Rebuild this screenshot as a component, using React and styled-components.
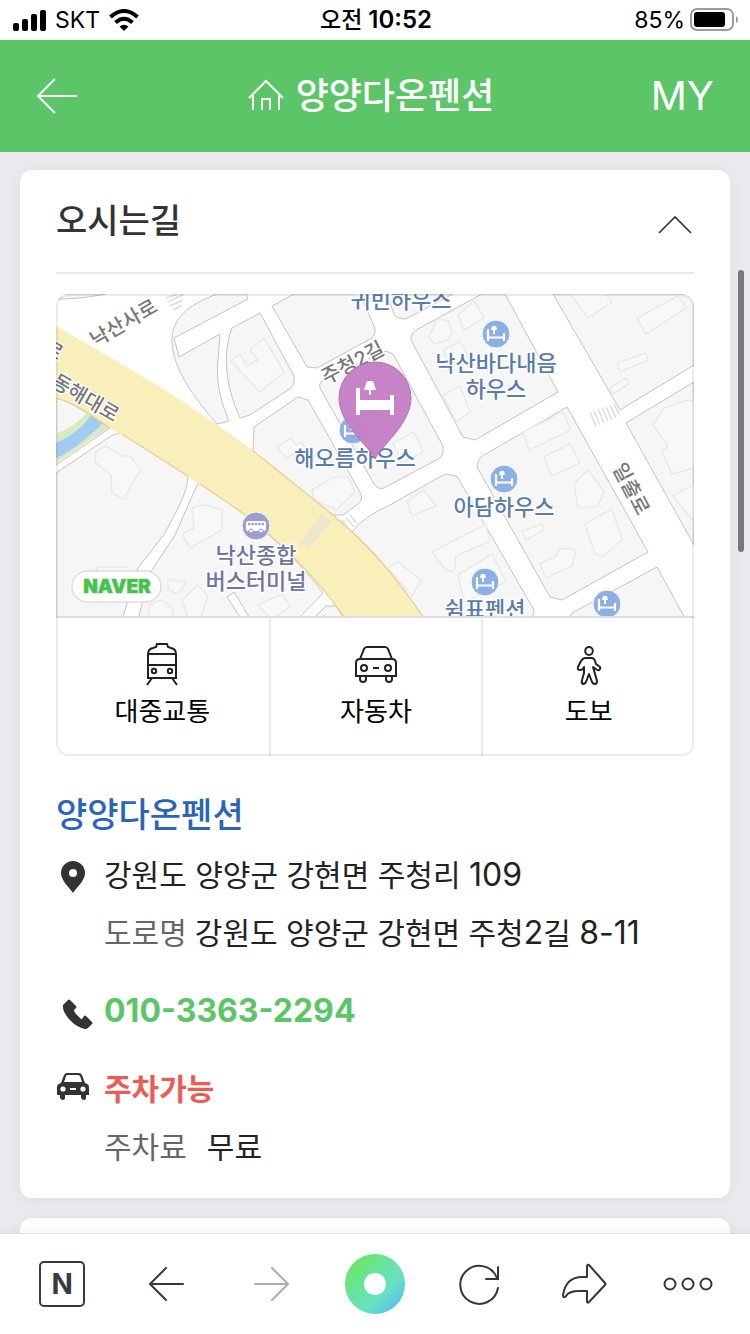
import React, { useState } from 'react'
import styled, { createGlobalStyle } from 'styled-components'

const GlobalStyle = createGlobalStyle`
    * {
        box-sizing: border-box;
    }
    body {
        margin: 0;
        background: #e9eaee;
        font-family: Inter, 'Noto Sans CJK KR', sans-serif;
        color: #222;
    }
    button {
        padding: 0;
        border: 0;
        background: none;
        font-family: inherit;
        color: inherit;
        cursor: pointer;
    }
    a {
        color: inherit;
        text-decoration: none;
    }
    h1, h2, h3, p {
        margin: 0;
    }
    svg {
        display: block;
        flex: none;
    }
`
const Screen = styled.div`
    display: flex;
    flex-direction: column;
    height: 100vh;
    overflow: hidden;
`

/* 상태바 */
const StatusBar = styled.div`
    display: grid;
    grid-template-columns: 1fr auto 1fr;
    align-items: center;
    flex: none;
    height: 40px;
    padding: 0 11px 0 13px;
    background: #fff;
    color: #000;
    line-height: 40px;
`
const StatusSide = styled.div`
    display: flex;
    align-items: center;
    justify-content: ${(props) => (props.$end ? 'flex-end' : 'flex-start')};
    gap: ${(props) => (props.$end ? '5px' : '9px')};
    font-size: 23px;
`
const StatusTime = styled.div`
    display: flex;
    gap: 6px;
    font-size: 24px;
    font-weight: 600;
`
const Meridiem = styled.span`
    font-size: 23px;
    font-weight: 500;
`

/* 헤더 */
const Header = styled.header`
    display: grid;
    grid-template-columns: 1fr auto 1fr;
    align-items: center;
    flex: none;
    height: 112px;
    padding: 0 36px;
    background: #5bc568;
    color: #fff;
`
const HeaderTitle = styled.a`
    display: flex;
    align-items: center;
    gap: 12px;
    padding-right: 8px;
`
const HeaderName = styled.h1`
    font-size: 36px;
    font-weight: 500;
    line-height: 52px;
`
const HeaderMy = styled.a`
    justify-self: end;
    font-size: 40px;
    line-height: 52px;
`

/* 본문 */
const Content = styled.main`
    position: relative;
    flex: 1;
    min-height: 0;
    overflow: hidden;
    padding: 18px 20px 0;
`
const ScrollThumb = styled.div`
    position: absolute;
    top: 118px;
    right: 6px;
    width: 6px;
    height: 282px;
    border-radius: 3px;
    background: #77797b;
`
const Card = styled.section`
    min-height: 100px;
    margin-bottom: 20px;
    padding: 0 36px 22px;
    border-radius: 12px;
    background: #fff;
    box-shadow: 0 2px 16px rgba(0, 0, 0, 0.05);
`
const CardHeader = styled.div`
    display: flex;
    align-items: center;
    justify-content: space-between;
    height: 104px;
    border-bottom: 2px solid #e9e9e9;
`
const CardTitle = styled.h2`
    font-size: 34px;
    font-weight: 500;
    line-height: 52px;
    color: #333;
`
const MapBox = styled.div`
    position: relative;
    margin-top: 20px;
    border-radius: 12px;
    overflow: hidden;
    &::after {
        content: "";
        position: absolute;
        inset: 0;
        border: 2px solid rgba(0, 0, 0, 0.08);
        border-radius: 12px;
        pointer-events: none;
    }
`
const MapLink = styled.a`
    display: block;
    border-bottom: 2px solid #dedede;
    svg {
        width: 100%;
        height: auto;
    }
`
const RouteList = styled.div`
    display: grid;
    grid-template-columns: repeat(3, 1fr);
    height: 138px;
`
const RouteButton = styled.button`
    display: flex;
    flex-direction: column;
    align-items: center;
    gap: 6px;
    padding-top: 24px;
    color: #000;
    font-size: 26px;
    line-height: 40px;
    & + & {
        border-left: 2px solid #ebebeb;
    }
`
const PlaceName = styled.h3`
    margin-top: 30px;
    font-size: 34px;
    font-weight: 500;
    line-height: 58px;
    color: #2b65bb;
`
const InfoRow = styled.div`
    display: grid;
    grid-template-columns: 40px 1fr;
    column-gap: 8px;
    margin-top: ${(props) => (props.$first ? '2px' : '20px')};
    color: #333;
`
const InfoIcon = styled.div`
    display: flex;
    align-items: center;
    height: 58px;
`
const InfoLine = styled.p`
    font-size: 30px;
    line-height: 58px;
    color: #222;
`
const InfoLabel = styled.span`
    margin-right: ${(props) => (props.$wide ? '20px' : '8px')};
    color: #666;
`
const Num = styled.span`
    font-size: 32px;
    line-height: 1;
`
const Phone = styled.a`
    font-size: 32px;
    font-weight: 700;
    line-height: 58px;
    color: #5bc568;
`
const Parking = styled.p`
    font-size: 30px;
    font-weight: 700;
    line-height: 58px;
    color: #eb5c57;
`

/* 하단 툴바 */
const Toolbar = styled.nav`
    position: relative;
    display: grid;
    grid-template-columns: repeat(7, 1fr);
    flex: none;
    height: 101px;
    padding: 0 10px;
    border-top: 1px solid #dcdee0;
    background: #fff;
    box-shadow: 0 -2px 12px rgba(0, 0, 0, 0.04);
    color: #34373c;
`
const ToolButton = styled.button`
    display: flex;
    align-items: center;
    justify-content: center;
    &:disabled {
        color: #adaeb1;
    }
`
const NaverHome = styled.span`
    display: flex;
    align-items: center;
    justify-content: center;
    width: 46px;
    height: 46px;
    border: 2px solid #343b43;
    border-radius: 5px;
    color: #343b43;
    font-size: 28px;
    font-weight: 700;
    line-height: 40px;
`
const GreenDot = styled.span`
    display: flex;
    align-items: center;
    justify-content: center;
    width: 60px;
    height: 60px;
    border-radius: 50%;
    background: linear-gradient(135deg, #6be56c 15%, #68e3aa 50%, #66dfc7 68%, #58b9f0 90%);
    &::after {
        content: "";
        width: 22px;
        height: 22px;
        border-radius: 50%;
        background: #fff;
    }
`

const Block = styled.path`
    fill: #f6f6f6;
    stroke: #c6c3be;
    stroke-width: 1;
    stroke-linejoin: round;
`
const Building = styled.path`
    fill: #f8f8f8;
    stroke: #e9e9e9;
    stroke-width: 1.5;
`
const MapLabel = styled.text`
    fill: ${(props) => props.$color || '#5a7cab'};
    stroke: #fff;
    stroke-width: 3px;
    stroke-linejoin: round;
    paint-order: stroke;
    font-size: 22px;
    font-weight: 500;
    text-anchor: middle;
`
const RoadLabel = styled.text`
    fill: #777;
    stroke: #fff;
    stroke-width: 3px;
    stroke-linejoin: round;
    paint-order: stroke;
    font-size: 20px;
    font-weight: 500;
    text-anchor: middle;
`
const NaverLabel = styled.text`
    fill: #45c34b;
    stroke: #45c34b;
    stroke-width: 0.5px;
    font-size: 19px;
    font-weight: 900;
    text-anchor: middle;
`

const blocks = [
    'M56 299 C76 299 90 297 106 294 L56 294 Z',
    'M217 294 C185 306 173 320 172 338 C171 363 188 391 217 424 L229 421 C219 397 216 380 218 360 L220 334 L179 357 L174 338 L248 299 L246 294 Z',
    'M260 313 L232 328 C226 342 226 358 227 372 C229 392 235 406 240 418 L250 415 L291 388 Q295 384 294 376 Z',
    'M272 306 L294 294 L360 294 L375 328 Q376 334 372 338 L317 368 L307 367 Z',
    'M254 427 L298 397 L308 400 L361 494 Q363 500 358 504 L343 515 L333 515 L253 451 Z',
    'M320 388 Q318 382 326 378 L386 351 L393 354 L443 446 Q444 454 440 458 L384 488 Q378 490 374 484 Z',
    'M352 532 Q364 516 390 505 L445 474 L457 476 L534 610 L532 620 L424 620 C398 582 380 556 352 532 Z',
    'M56 398 C72 402 92 416 110 428 L56 465 Z',
    'M56 473 L108 438 Q116 432 122 434 L188 476 Q188 488 178 508 L165 533 L138 568 L122 620 L56 620 Z',
    'M198 483 C245 510 295 555 323 593 L297 620 L251 620 L234 592 L227 597 L242 620 L138 620 L150 573 L175 535 Z',
    'M312 620 L326 606 L336 606 L345 620 Z',
    'M387 294 L394 314 Q397 319 406 319 L453 294 Z',
    'M411 340 Q410 334 416 330 L482 294 L505 294 L558 392 L475 440 L463 437 Z',
    'M553 294 L620 410 L694 365 L694 294 Z',
    'M626 423 L694 382 L694 545 Z',
    'M477 467 Q477 459 484 455 L567 407 L648 552 L562 600 L550 597 Z',
    'M569 620 L572 613 L657 567 L686 620 Z',
]

const buildings = [
    'M96 452 L106 446 L122 456 L130 456 L141 470 L134 480 L124 499 L112 493 L111 475 L95 462 Z',
    'M231 361 L240 354 L247 366 L258 360 L250 350 L264 338 L284 372 L260 392 Z',
    'M192 508 L204 505 L222 510 L222 530 L190 548 L182 534 L194 528 Z',
    'M277 447 L291 438 L296 445 L302 442 L305 449 L286 458 Z',
    'M312 490 L332 478 L348 476 L355 492 L336 510 L328 506 L314 500 Z',
    'M97 567 L128 567 L128 592 L97 592 Z',
    'M168 580 L186 582 L178 594 L168 590 Z',
    'M150 604 L162 600 L174 610 L170 620 L148 620 Z',
    'M182 600 L198 585 L208 596 L200 620 L188 618 Z',
    'M258 605 L282 594 L290 606 L272 620 Z',
    'M429 337 L437 319 L448 321 L452 332 L448 340 L434 344 Z',
    'M458 315 L474 301 L484 318 L464 330 Z',
    'M444 350 L460 341 L468 356 L448 366 Z',
    'M443 395 L460 386 L470 412 L456 422 Z',
    'M393 443 L414 432 L423 452 L402 463 Z',
    'M523 432 L563 412 L571 430 L529 450 Z',
    'M544 457 L570 444 L580 463 L552 476 Z',
    'M574 484 L588 470 L604 492 L598 506 L578 508 Z',
    'M585 524 L612 509 L622 540 L603 556 L595 554 Z',
    'M522 531 L542 524 L544 530 L526 540 Z',
    'M540 564 L556 556 L560 548 L576 550 L572 566 L546 578 Z',
    'M407 501 L424 490 L436 506 L412 516 Z',
    'M432 552 L486 524 L490 541 L456 556 L454 572 L446 570 Z',
    'M388 568 L398 562 L421 580 L412 596 Z',
    'M458 575 L492 554 L506 582 L464 602 Z',
    'M570 294 L588 318 L612 302 L606 294 Z',
    'M637 318 L678 296 L686 308 L646 334 Z',
    'M617 363 L646 353 L648 360 L620 372 Z',
    'M610 388 L626 378 L629 384 L613 394 Z',
    'M653 425 L664 408 L688 400 L694 402 L694 468 L672 474 L662 452 L668 446 Z',
    'M673 496 L694 484 L694 522 Z',
]

const places = [
    { x: 353, y: 430 },
    { x: 496, y: 334 },
    { x: 504, y: 479 },
    { x: 485, y: 582 },
    { x: 607, y: 604 },
]

const labels = [
    { x: 401, y: 308, text: '귀빈하우스' },
    { x: 496, y: 371, text: '낙산바다내음' },
    { x: 496, y: 397, text: '하우스' },
    { x: 355, y: 466, text: '해오름하우스' },
    { x: 504, y: 515, text: '아담하우스' },
    { x: 485, y: 617, text: '쉼표펜션' },
    { x: 256, y: 563, text: '낙산종합', color: '#70759f' },
    { x: 256, y: 589, text: '버스터미널', color: '#70759f' },
]

const roads = [
    { x: 127, y: 329, rotate: -30, text: '낙산사로' },
    { x: 82, y: 404, rotate: 30, text: '동해대로' },
    { x: 356, y: 369, rotate: -28, text: '주청2길' },
    { x: 625, y: 492, rotate: 62, text: '일출로' },
    { x: 50, y: 356, rotate: 30, text: '로' },
]

const Bed = () => (
    <path d="M-8 -5 V7 M-8 3.5 H8 M8 -1 V7" fill="none" stroke="#fff" strokeWidth="2.2" />
)

function PensionMap() {
    return (
        <svg viewBox="56 294 638 322" role="img" aria-label="양양다온펜션 지도">
            <rect x="56" y="294" width="638" height="324" fill="#fff" />
            {blocks.map((d) => <Block key={d} d={d} />)}
            {buildings.map((d) => <Building key={d} d={d} />)}
            <path d="M56 433 C70 430 80 420 88 412 L110 427 L56 463 Z" fill="#d6ebc4" />
            <path d="M56 443 C72 436 84 426 91 415 L105 421 C92 434 74 450 56 458 Z" fill="#a2caf3" />
            <path
                d="M56 326 L103 353 L160 387 C200 412 240 440 283 473 L333 515 C374 550 398 580 424 618 L345 618 C318 580 282 542 237 509 C212 492 170 465 110 428 C92 416 76 403 56 398 Z"
                fill="#f9efba"
            />
            <path
                d="M253 451 L333 515 C374 550 398 580 424 618 M345 618 C318 580 282 542 237 509 L200 484 M188 476 L122 434 M110 428 C92 416 76 403 56 398"
                fill="none" stroke="#e5cf98" strokeWidth="1.2"
            />
            <path d="M298 545 L322 514 L332 522 L308 548 Z" fill="#ece6cb" />
            <path d="M166 298 L178 294 M168 302 L184 294 M170 306 L183 300 M173 310 L182 305" stroke="#ddd" strokeWidth="1.5" />
            <path d="M342 520 L350 530 M346 518 L354 527 M350 515 L357 524" stroke="#ddd" strokeWidth="1.5" />
            <path d="M590 412 L596 426 M594 411 L600 425 M598 409 L604 423 M602 408 L608 421 M606 407 L612 420 M610 405 L616 418 M614 404 L619 414" stroke="#ddd" strokeWidth="1.5" />
            {roads.map((e) => (
                <RoadLabel key={e.text + e.x} transform={`translate(${e.x} ${e.y}) rotate(${e.rotate})`}>{e.text}</RoadLabel>
            ))}
            {places.map((e) => (
                <g key={e.x} transform={`translate(${e.x} ${e.y})`}>
                    <circle r="14" fill="#8cb0e6" stroke="#fff" />
                    <Bed />
                    <path d="M-4 -8 H0 L1 -4 H-5 Z M-3 -4 H-1 V0 H-3 Z" fill="#fff" />
                </g>
            ))}
            <circle cx="256" cy="526" r="14" fill="#9a9fd0" stroke="#fff" />
            <rect x="246" y="521" width="20" height="10" rx="2" fill="#fff" />
            <path d="M248 524 H264" stroke="#9a9fd0" strokeWidth="2.4" strokeDasharray="2.4 1" />
            <circle cx="251" cy="531" r="2" fill="#fff" stroke="#9a9fd0" />
            <circle cx="261" cy="531" r="2" fill="#fff" stroke="#9a9fd0" />
            <circle cx="324" cy="629" r="14" fill="#7d9fd0" stroke="#fff" />
            {labels.map((e) => (
                <MapLabel key={e.text + e.y} x={e.x} y={e.y} $color={e.color}>{e.text}</MapLabel>
            ))}
            <path
                d="M375 459 C370 447 339 424 339 398 A36 36 0 0 1 411 398 C411 424 380 447 375 459 Z"
                fill="#c47fc5" stroke="#b070b4" fillOpacity="0.96"
            />
            <path d="M356 388 h4 v12 h30 v-5 h4 v20 h-4 v-5 h-30 v5 h-4 Z" fill="#fff" />
            <path d="M367 381 h6 l3 9 h-5 v5 h-2 v-5 h-5 Z" fill="#fff" />
            <rect x="72" y="571" width="89" height="31" rx="15.5" fill="#fff" stroke="#dedede" strokeWidth="1.5" />
            <NaverLabel x="117" y="593">NAVER</NaverLabel>
        </svg>
    )
}

const BusIcon = () => (
    <svg width="36" height="44" viewBox="0 0 36 44" fill="none" stroke="#222" strokeWidth="2">
        <path d="M4 36 V12 Q4 7 9 6 L12 5 L13 2 H23 L24 5 L27 6 Q32 7 32 12 V36 Z M4 12 H32 M4 23 H32 M8 36 L3 43 M28 36 L33 43" />
        <circle cx="10" cy="29" r="2.2" />
        <circle cx="26" cy="29" r="2.2" />
    </svg>
)
const CarIcon = () => (
    <svg width="44" height="44" viewBox="0 0 44 44" fill="none" stroke="#222" strokeWidth="2">
        <path d="M6 17 L10 7 Q11 5 13 5 H31 Q33 5 34 7 L38 17 M2 34 V21 Q2 17 6 17 H38 Q42 17 42 21 V34 Z M6 34 V37 Q6 40 9 40 T12 37 V34 M32 34 V37 Q32 40 35 40 T38 37 V34 M19 26 H25" />
        <circle cx="10" cy="26" r="3" />
        <circle cx="34" cy="26" r="3" />
    </svg>
)
const WalkIcon = () => (
    <svg width="28" height="44" viewBox="0 0 28 44" fill="none" stroke="#222" strokeWidth="2" strokeLinejoin="round">
        <ellipse cx="14" cy="9" rx="3.8" ry="4" />
        <path d="M10 16 H17 Q19 16 20 19 L21 22 L25 25 Q26 27 24 28 Q23 29 18 25 L22 39 Q22 42 20 42 Q18 42 17 40 L14 32 L11 40 Q10 42 8 42 Q6 41 7 38 L9 31 V25 Q8 28 5 28 Q2 28 3 25 L6 19 Q8 16 10 16 Z" />
    </svg>
)
const PinIcon = () => (
    <svg width="40" height="40" viewBox="0 0 40 40">
        <path d="M17 38 C14 33 5 26 5 18 A12 12 0 0 1 29 18 C29 26 20 33 17 38 Z M17 14 A4 4 0 1 0 17 22 A4 4 0 0 0 17 14 Z" fill="#333" fillRule="evenodd" />
    </svg>
)
const PhoneIcon = () => (
    <svg width="40" height="40" viewBox="0 0 40 40">
        <path d="M7 14 L12 9 Q13 8 14 9 L20 15 Q21 16 20 17 L18 19 Q18 21 22 25 T26 28 L28 25 Q29 24 30 25 L36 31 Q37 32 36 33 L32 37 Q31 38 29 38 Q20 36 13 28 Q6 20 7 14 Z" fill="#333" />
    </svg>
)
const ParkingIcon = () => (
    <svg width="40" height="40" viewBox="0 0 40 40">
        <path d="M5 14 L8 6 Q9 4 11 4 H23 Q25 4 26 6 L29 14 Q33 15 33 18 V26 H30 V29 Q30 31 28 31 T25 29 V26 H9 V29 Q9 31 7 31 T4 29 V26 H1 V18 Q1 15 5 14 Z M8 13 H26 L24 7 Q23 6 22 6 H12 Q10 6 10 7 Z" fill="#333" fillRule="evenodd" />
        <circle cx="7" cy="20" r="2.6" fill="#fff" />
        <circle cx="27" cy="20" r="2.6" fill="#fff" />
        <rect x="14" y="19" width="6" height="2" fill="#fff" />
    </svg>
)

const routes = [
    { id: 'transit', name: '대중교통', icon: <BusIcon /> },
    { id: 'car', name: '자동차', icon: <CarIcon /> },
    { id: 'walk', name: '도보', icon: <WalkIcon /> },
]

function Directions() {
    const [open, setOpen] = useState(true)

    return (
        <Card>
            <CardHeader>
                <CardTitle>오시는길</CardTitle>
                <button aria-label="접기" aria-expanded={open} onClick={() => setOpen(!open)}>
                    <svg width="38" height="28" viewBox="0 0 38 28" fill="none" stroke="#333" strokeWidth="1.6">
                        <path d={open ? 'M3 26 L19 10 L35 26' : 'M3 10 L19 26 L35 10'} />
                    </svg>
                </button>
            </CardHeader>
            {open && (
                <>
                    <MapBox>
                        <MapLink href="#map"><PensionMap /></MapLink>
                        <RouteList>
                            {routes.map((e) => <RouteButton key={e.id}>{e.icon}{e.name}</RouteButton>)}
                        </RouteList>
                    </MapBox>
                    <PlaceName>양양다온펜션</PlaceName>
                    <InfoRow $first>
                        <InfoIcon><PinIcon /></InfoIcon>
                        <div>
                            <InfoLine>강원도 양양군 강현면 주청리 <Num>109</Num></InfoLine>
                            <InfoLine><InfoLabel>도로명</InfoLabel>강원도 양양군 강현면 주청<Num>2</Num>길 <Num>8-11</Num></InfoLine>
                        </div>
                    </InfoRow>
                    <InfoRow>
                        <InfoIcon><PhoneIcon /></InfoIcon>
                        <Phone href="tel:010-3363-2294">010-3363-2294</Phone>
                    </InfoRow>
                    <InfoRow>
                        <InfoIcon><ParkingIcon /></InfoIcon>
                        <div>
                            <Parking>주차가능</Parking>
                            <InfoLine><InfoLabel $wide>주차료</InfoLabel>무료</InfoLine>
                        </div>
                    </InfoRow>
                </>
            )}
        </Card>
    )
}

function App() {
    return (
        <>
            <GlobalStyle />
            <Screen>
                <StatusBar>
                    <StatusSide>
                        <svg width="33" height="22" viewBox="0 0 33 22">
                            <rect x="0" y="14" width="6" height="8" rx="2" />
                            <rect x="9" y="10" width="6" height="12" rx="2" />
                            <rect x="18" y="5" width="6" height="17" rx="2" />
                            <rect x="27" y="1" width="6" height="21" rx="2" />
                        </svg>
                        SKT
                        <svg width="30" height="22" viewBox="0 0 30 22" fill="none" stroke="#000" strokeWidth="4">
                            <path d="M1.5 8 Q15 -4 28.5 8" />
                            <path d="M6.5 13.5 Q15 6 23.5 13.5" />
                            <path d="M15 22 L10.5 17.5 Q15 14 19.5 17.5 Z" fill="#000" stroke="none" />
                        </svg>
                    </StatusSide>
                    <StatusTime><Meridiem>오전</Meridiem>10:52</StatusTime>
                    <StatusSide $end>
                        85%
                        <svg width="49" height="24" viewBox="0 0 49 24">
                            <rect x="1" y="1" width="42" height="21" rx="6" fill="none" stroke="#9b9b9b" strokeWidth="2" />
                            <rect x="4" y="4" width="31" height="15" rx="3" />
                            <path d="M46 8 Q48 9 48 11.5 T46 15 Z" fill="#9b9b9b" />
                        </svg>
                    </StatusSide>
                </StatusBar>
                <Header>
                    <button aria-label="뒤로">
                        <svg width="42" height="36" viewBox="0 0 42 36" fill="none" stroke="#fff" strokeWidth="2">
                            <path d="M41 18 H2 M19 1 L2 18 L19 35" />
                        </svg>
                    </button>
                    <HeaderTitle href="#home">
                        <svg width="36" height="34" viewBox="0 0 36 34" fill="none" stroke="#fff" strokeWidth="2">
                            <path d="M1 19 L18 2 L35 19 M5 15 V31 M31 15 V31 M14 31 V20 H22 V31" />
                        </svg>
                        <HeaderName>양양다온펜션</HeaderName>
                    </HeaderTitle>
                    <HeaderMy href="#my">MY</HeaderMy>
                </Header>
                <Content>
                    <Directions />
                    <Card />
                    <ScrollThumb />
                </Content>
                <Toolbar>
                    <ToolButton aria-label="네이버 홈"><NaverHome>N</NaverHome></ToolButton>
                    <ToolButton aria-label="이전">
                        <svg width="36" height="36" viewBox="0 0 36 36" fill="none" stroke="currentColor" strokeWidth="2" strokeLinecap="round">
                            <path d="M35 18 H2 M18 2 L2 18 L18 34" />
                        </svg>
                    </ToolButton>
                    <ToolButton aria-label="다음" disabled>
                        <svg width="36" height="36" viewBox="0 0 36 36" fill="none" stroke="currentColor" strokeWidth="2" strokeLinecap="round">
                            <path d="M2 18 H35 M19 2 L35 18 L19 34" />
                        </svg>
                    </ToolButton>
                    <ToolButton aria-label="그린닷"><GreenDot /></ToolButton>
                    <ToolButton aria-label="새로고침">
                        <svg width="42" height="42" viewBox="0 0 42 42" fill="none" stroke="currentColor" strokeWidth="2" strokeLinecap="round">
                            <path d="M40 25 A19 19 0 1 1 39 15 M40 4 V16 H28" />
                        </svg>
                    </ToolButton>
                    <ToolButton aria-label="공유">
                        <svg width="46" height="42" viewBox="0 0 46 42" fill="none" stroke="currentColor" strokeWidth="2" strokeLinejoin="round">
                            <path d="M26 14 V3 Q27 1 28 2 L44 20 Q45 21 44 22 L28 39 Q27 40 26 39 V28 H18 Q8 28 5 33 Q2 36 2 32 Q5 14 21 14 Z" />
                        </svg>
                    </ToolButton>
                    <ToolButton aria-label="더보기">
                        <svg width="50" height="14" viewBox="0 0 50 14" fill="none" stroke="currentColor" strokeWidth="2">
                            <circle cx="7" cy="7" r="5.5" />
                            <circle cx="25" cy="7" r="5.5" />
                            <circle cx="43" cy="7" r="5.5" />
                        </svg>
                    </ToolButton>
                </Toolbar>
            </Screen>
        </>
    )
}

export default App
